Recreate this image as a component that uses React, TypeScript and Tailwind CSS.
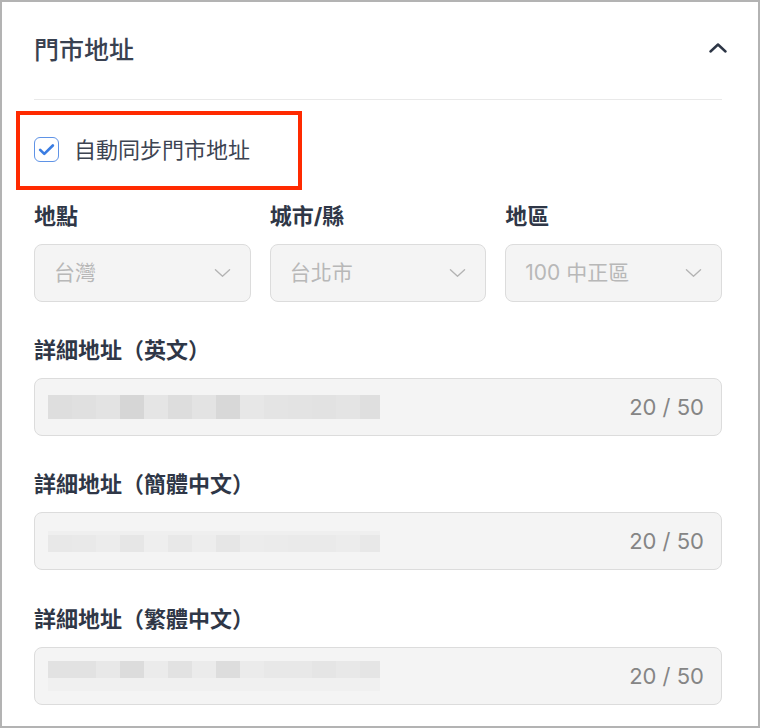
const fontStack = "font-['Inter','Noto_Sans_CJK_TC',sans-serif]";

// pixelated (redacted) address text, one class per block
const rowEn = [
  "bg-[#dedede]", "bg-[#e0e0e0]", "bg-[#e3e3e3]", "bg-[#d6d6d6]", "bg-[#e5e5e5]",
  "bg-[#dddddd]", "bg-[#e3e3e3]", "bg-[#d8d8d8]", "bg-[#e7e7e7]", "bg-[#e4e4e4]",
  "bg-[#e3e3e3]", "bg-[#e2e2e2]", "bg-[#e4e4e4]", "bg-[#dfdfdf]",
];
const rowSc = [
  "bg-[#e8e8e8]", "bg-[#e9e9e9]", "bg-[#ececec]", "bg-[#e6e6e6]", "bg-[#eeeeee]",
  "bg-[#e8e8e8]", "bg-[#ededed]", "bg-[#e6e6e6]", "bg-[#ececec]", "bg-[#ebebeb]",
  "bg-[#eaeaea]", "bg-[#eaeaea]", "bg-[#ececec]", "bg-[#e8e8e8]",
];
const rowTc = [
  "bg-[#e2e2e2]", "bg-[#e2e2e2]", "bg-[#e8e8e8]", "bg-[#dcdcdc]", "bg-[#ebebeb]",
  "bg-[#e2e2e2]", "bg-[#ebebeb]", "bg-[#dddddd]", "bg-[#ebebeb]", "bg-[#e8e8e8]",
  "bg-[#e8e8e8]", "bg-[#e5e5e5]", "bg-[#e8e8e8]", "bg-[#e5e5e5]",
];

function Redacted({ blocks, variant }: { blocks: string[]; variant: "en" | "sc" | "tc" }) {
  return (
    <div className="flex flex-col w-[332px] overflow-hidden">
      {variant === "sc" && <div className="h-[4px] bg-[#efefef]" />}
      <div className={variant === "en" ? "flex h-[24px]" : "flex h-[17px]"}>
        {blocks.map((c, i) => (
          <div key={i} className={`w-[24px] shrink-0 h-full ${c}`} />
        ))}
      </div>
      {variant === "tc" && <div className="h-[13px] bg-[#f0f0f0]" />}
    </div>
  );
}

function Label({ children }: { children: React.ReactNode }) {
  return (
    <div className="text-[22px] leading-[30px] font-bold text-[#2f3747]">{children}</div>
  );
}

function Chevron({ up, className }: { up?: boolean; className: string }) {
  return (
    <svg viewBox="0 0 18 10" className={className} fill="none" stroke="currentColor" strokeLinecap="round" strokeLinejoin="round">
      <path d={up ? "M1.5 8.5L9 1.5l7.5 7" : "M1.5 1.5L9 8.5l7.5-7"} />
    </svg>
  );
}

function SelectBox({ value }: { value: string }) {
  return (
    <div className="h-[58px] flex items-center justify-between pl-[19px] pr-[19px] bg-[#f4f4f4] border border-[#dcdcdc] rounded-[8px]">
      <span className="text-[21px] text-[#b8b8b8]">{value}</span>
      <Chevron className="w-[17px] h-[10px] text-[#b3b3b3] stroke-[1.4]" />
    </div>
  );
}

function AddressInput({ blocks, variant }: { blocks: string[]; variant: "en" | "sc" | "tc" }) {
  return (
    <div className="mt-[13px] h-[58px] flex items-center justify-between pl-[13px] pr-[17px] bg-[#f4f4f4] border border-[#dcdcdc] rounded-[8px]">
      <Redacted blocks={blocks} variant={variant} />
      <span className="text-[22px] text-[#858585]">20 / 50</span>
    </div>
  );
}

export default function App() {
  return (
    <div className={`w-[760px] h-[728px] border-2 border-[#b3b3b3] bg-white ${fontStack}`}>
      <div className="pl-[32px] pr-[36px] pt-[33px]">
        {/* Header */}
        <div className="h-[30px] flex items-center justify-between">
          <h1 className="text-[25px] leading-[30px] font-medium text-[#394150]">門市地址</h1>
          <Chevron up className="w-[18px] h-[10px] mr-[-5px] mb-[4px] text-[#2d3646] stroke-[2.4]" />
        </div>
        <div className="mt-[34px] h-px bg-[#e9e9e9]" />

        {/* Sync checkbox */}
        <div className="relative mt-[37px] h-[25px] flex items-center gap-[15px]">
          <div className="w-[25px] h-[25px] rounded-[6px] border-[1.5px] border-[#5f93e6] bg-white flex items-center justify-center">
            <svg viewBox="0 0 24 24" className="w-[19px] h-[19px]" fill="none" stroke="#3b7de2" strokeWidth={3.4} strokeLinecap="round" strokeLinejoin="round">
              <path d="M4 12.5l5.2 5L20 7" />
            </svg>
          </div>
          <span className="text-[22px] leading-[30px] text-[#3d4452]">自動同步門市地址</span>
          <div className="absolute left-[-18px] top-[-26px] w-[286px] h-[79px] border-[4px] border-[#ff2a00]" />
        </div>

        {/* Location selects */}
        <div className="mt-[39px] grid grid-cols-3 gap-x-[19px]">
          <Label>地點</Label>
          <Label>城市/縣</Label>
          <Label>地區</Label>
        </div>
        <div className="mt-[13px] grid grid-cols-3 gap-x-[19px]">
          <SelectBox value="台灣" />
          <SelectBox value="台北市" />
          <SelectBox value="100 中正區" />
        </div>

        {/* Address lines */}
        <div className="mt-[33px]">
          <Label>詳細地址（英文）</Label>
          <AddressInput blocks={rowEn} variant="en" />
        </div>
        <div className="mt-[33px]">
          <Label>詳細地址（簡體中文）</Label>
          <AddressInput blocks={rowSc} variant="sc" />
        </div>
        <div className="mt-[34px]">
          <Label>詳細地址（繁體中文）</Label>
          <AddressInput blocks={rowTc} variant="tc" />
        </div>
      </div>
    </div>
  );
}
